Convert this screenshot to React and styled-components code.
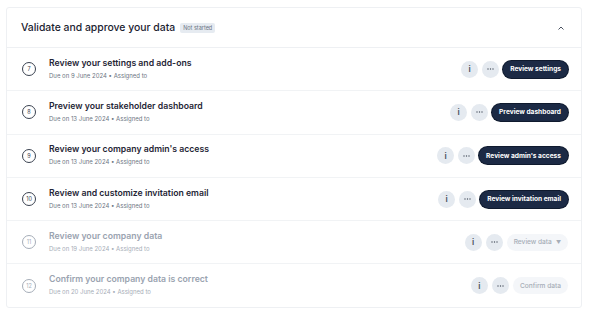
import React from "react";
import styled, { createGlobalStyle } from "styled-components";

const GlobalStyle = createGlobalStyle`
  html, body {
    margin: 0;
    padding: 0;
    background: #ffffff;
    font-family: Inter, "Noto Sans", sans-serif;
  }
`;

const Page = styled.div`
  padding: 7px 7px 0 6px;
`;

const Card = styled.section`
  border: 1px solid #eef0f3;
  border-radius: 3px;
  background: #fff;
`;

const Header = styled.header`
  display: flex;
  align-items: center;
  height: 39px;
  padding: 0 14px 0 14px;
  border-bottom: 1px solid #eef0f3;
`;

const Title = styled.h2`
  margin: 0;
  font-size: 10.4px;
  font-weight: 500;
  color: #1b2230;
`;

const Badge = styled.span`
  margin-left: 5px;
  padding: 2px 3px;
  background: #e6ebf1;
  border-radius: 2px;
  font-size: 5.5px;
  color: #6b7482;
`;

const Chevron = styled.svg`
  margin-left: auto;
  margin-right: 2px;
`;

const Row = styled.div`
  display: flex;
  align-items: center;
  height: 42.3px;
  padding: 0 13px 0 15px;
  border-bottom: ${(p) => (p.$last ? "none" : "1px solid #f1f3f5")};
`;

const Step = styled.span`
  width: 12px;
  height: 12px;
  border: 1px solid ${(p) => (p.$muted ? "#a5adb8" : "#3a4250")};
  border-radius: 50%;
  display: flex;
  align-items: center;
  justify-content: center;
  font-size: 5.5px;
  color: ${(p) => (p.$muted ? "#a5adb8" : "#3a4250")};
  flex-shrink: 0;
`;

const Text = styled.div`
  margin-left: 13px;
  display: flex;
  flex-direction: column;
  gap: 4px;
  margin-top: -2px;
`;

const TaskTitle = styled.div`
  font-size: 8.7px;
  font-weight: 600;
  color: ${(p) => (p.$muted ? "#9aa3b0" : "#1f2636")};
`;

const Meta = styled.div`
  font-size: 6px;
  color: ${(p) => (p.$muted ? "#a7aeb8" : "#6e7683")};
`;

const Actions = styled.div`
  margin-left: auto;
  display: flex;
  align-items: center;
  gap: 4px;
`;

const Round = styled.span`
  width: 17px;
  height: 17px;
  border-radius: 50%;
  background: #e5eaf0;
  display: flex;
  align-items: center;
  justify-content: center;
  color: #4a5260;
  font-size: 8.5px;
  font-weight: 600;
`;

const Button = styled.button`
  height: 17px;
  padding: 0 7px;
  border-radius: 9px;
  border: none;
  font-family: inherit;
  font-size: 6.6px;
  display: flex;
  align-items: center;
  gap: 4px;
  background: ${(p) => (p.$disabled ? "#f4f6f9" : "#1c2a45")};
  color: ${(p) => (p.$disabled ? "#a6adb7" : "#ffffff")};
  font-weight: ${(p) => (p.$disabled ? 500 : 700)};
  box-shadow: ${(p) => (p.$disabled ? "none" : "0 0 0 1px #0f1a2e")};
`;

const Caret = styled.span`
  font-size: 5px;
`;

const tasks = [
  { n: 7, title: "Review your settings and add-ons", due: "9 June 2024", action: "Review settings" },
  { n: 8, title: "Preview your stakeholder dashboard", due: "13 June 2024", action: "Preview dashboard" },
  { n: 9, title: "Review your company admin's access", due: "13 June 2024", action: "Review admin's access" },
  { n: 10, title: "Review and customize invitation email", due: "13 June 2024", action: "Review invitation email" },
  { n: 11, title: "Review your company data", due: "19 June 2024", action: "Review data", muted: true, caret: true },
  { n: 12, title: "Confirm your company data is correct", due: "20 June 2024", action: "Confirm data", muted: true },
];

export default function App() {
  return (
    <>
      <GlobalStyle />
      <Page>
        <Card>
          <Header>
            <Title>Validate and approve your data</Title>
            <Badge>Not started</Badge>
            <Chevron width="8" height="6" viewBox="0 0 8 6">
              <path d="M1.5 4.5 L4 2 L6.5 4.5" fill="none" stroke="#4a5260" strokeWidth="1" />
            </Chevron>
          </Header>
          {tasks.map((t, i) => (
            <Row key={t.n} $last={i === tasks.length - 1}>
              <Step $muted={t.muted}>{t.n}</Step>
              <Text>
                <TaskTitle $muted={t.muted}>{t.title}</TaskTitle>
                <Meta $muted={t.muted}>Due on {t.due} • Assigned to</Meta>
              </Text>
              <Actions>
                <Round>i</Round>
                <Round>
                  <svg width="7" height="2" viewBox="0 0 7 2">
                    <circle cx="1" cy="1" r="0.7" fill="#4a5260" />
                    <circle cx="3.5" cy="1" r="0.7" fill="#4a5260" />
                    <circle cx="6" cy="1" r="0.7" fill="#4a5260" />
                  </svg>
                </Round>
                <Button $disabled={t.muted}>
                  {t.action}
                  {t.caret && <Caret>▼</Caret>}
                </Button>
              </Actions>
            </Row>
          ))}
        </Card>
      </Page>
    </>
  );
}
